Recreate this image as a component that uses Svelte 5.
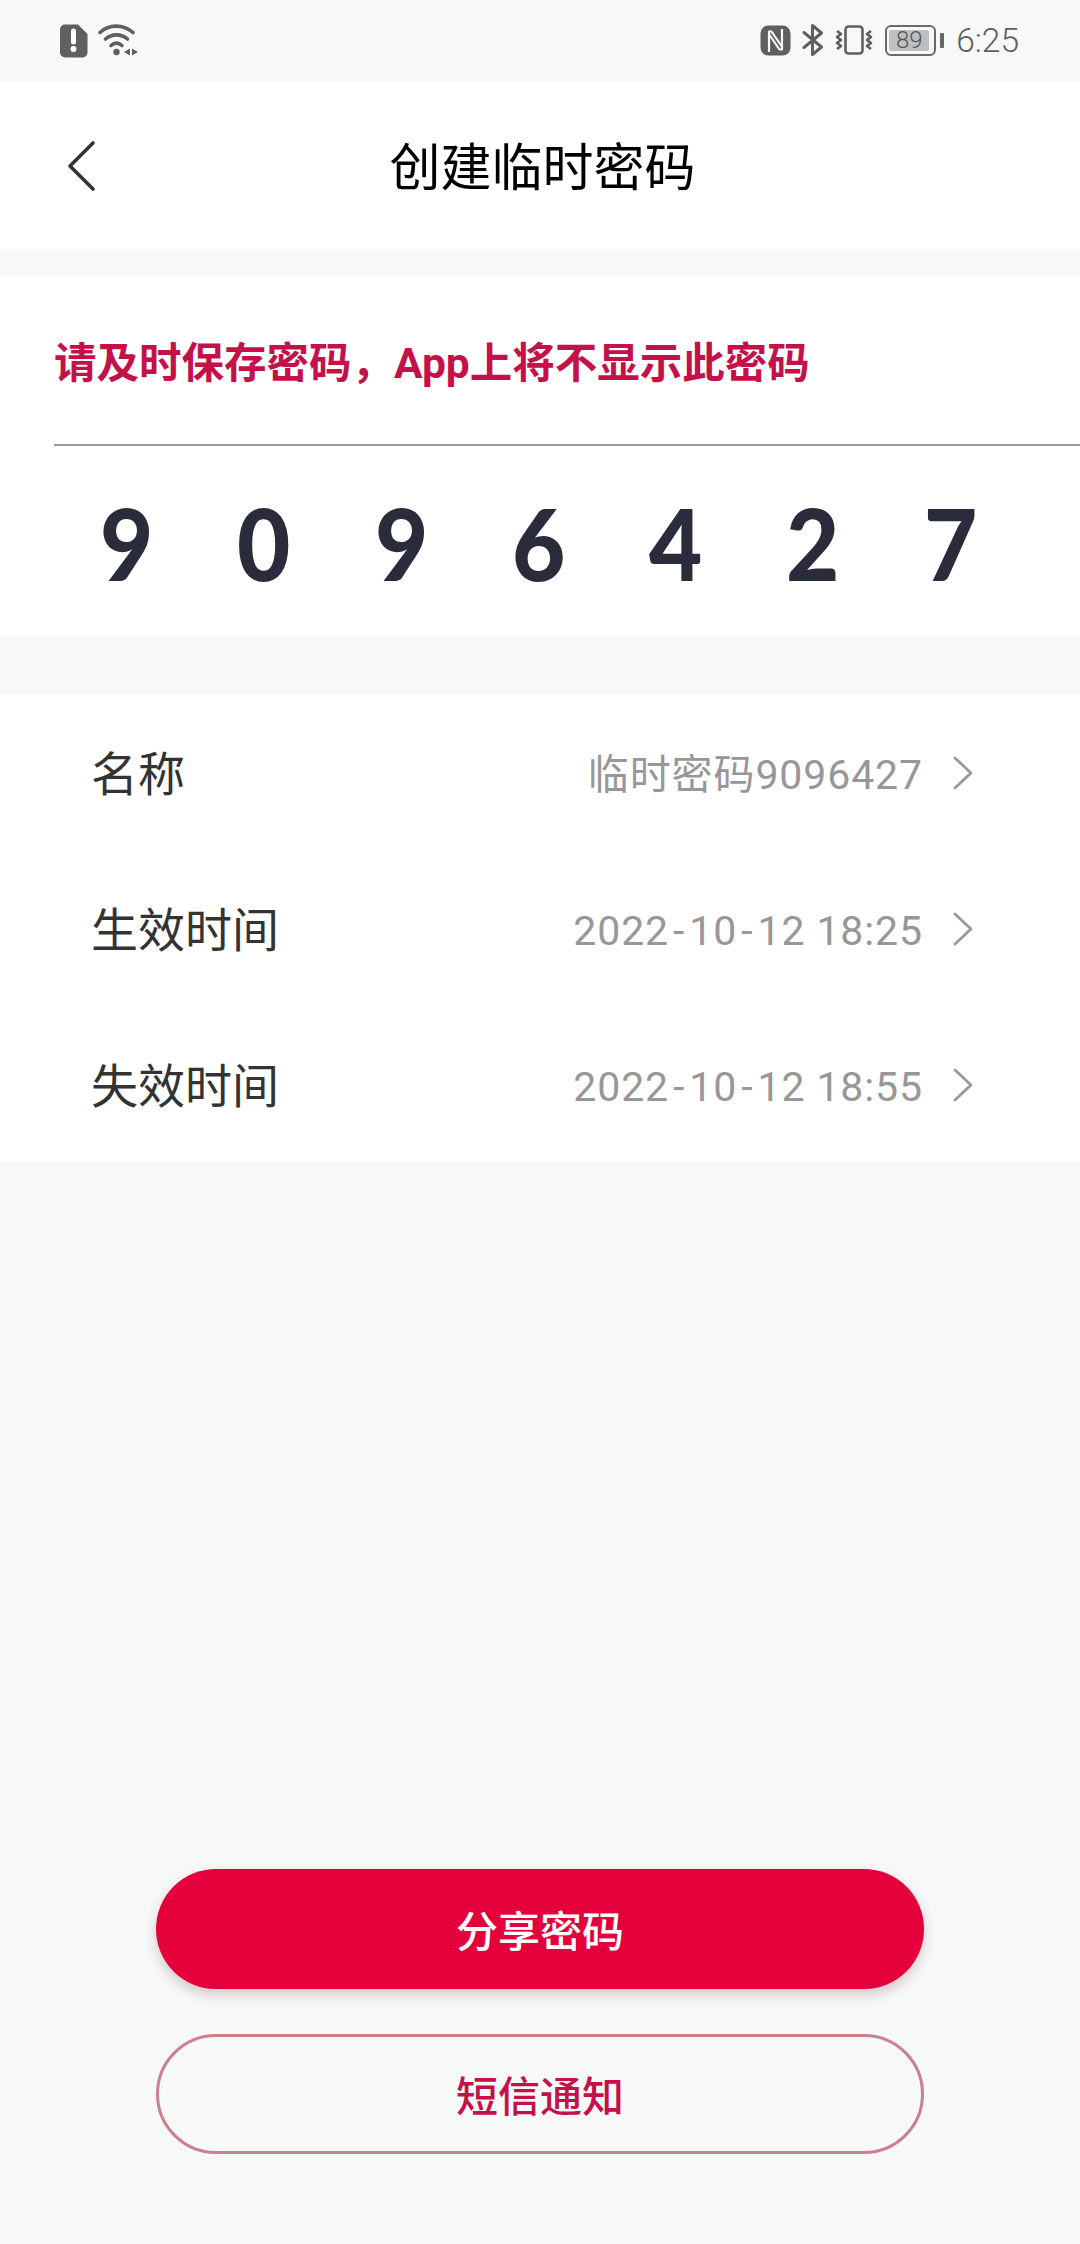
<script>
  const digits = ['9', '0', '9', '6', '4', '2', '7'];
  const rows = [
    { label: '名称', value: ['临时密码9096427'] },
    { label: '生效时间', value: ['2022', '10', '12 18:25'] },
    { label: '失效时间', value: ['2022', '10', '12 18:55'] }
  ];
</script>

<div class="page">
  <header class="status">
    <div class="status-left">
      <svg width="28" height="34" viewBox="0 0 28 34" class="alert">
        <path d="M5 0.5H18L27.5 10V28.5a5 5 0 0 1-5 5H5a5 5 0 0 1-5-5V5.500a5 5 0 0 1 5-5Z" fill="#5f5f5f" />
        <path d="M13.500 7v11" stroke="#fff" stroke-width="5" stroke-linecap="round" />
        <circle cx="13.500" cy="25" r="3" fill="#fff" />
      </svg>
      <svg width="40" height="34" viewBox="0 0 40 34" class="wifi">
        <g fill="none" stroke="#5f5f5f" stroke-width="3.600" stroke-linecap="round">
          <path d="M2 8.500C11 0 25 0 35 8.500" />
          <path d="M7.500 15C14 9.500 23 9.500 29.500 15" />
          <path d="M13 21.500C16.500 18.500 20.500 18.500 24 21.500" />
        </g>
        <circle cx="18.500" cy="28" r="3.200" fill="#5f5f5f" />
        <path d="M32 24.500v7l-6-3.500ZM34 24.500v7l6-3.500Z" fill="#5f5f5f" />
      </svg>
    </div>
    <div class="status-right">
      <svg width="31" height="31" viewBox="0 0 31 31" class="nfc">
        <rect x="0.500" y="0.500" width="30" height="30" rx="8" fill="#5f5f5f" />
        <g fill="none" stroke="#f6f8f8" stroke-width="2.200" stroke-linejoin="round">
          <path d="M9 27V6.500h2.500L21.500 21" />
          <path d="M22 4V24.500h-2.500L9.500 10" />
        </g>
      </svg>
      <svg width="22" height="32" viewBox="0 0 22 32" class="bt">
        <path d="M2 8.500L19.500 23L10.500 30.500V1.500L19.500 9L2 23.500" fill="none" stroke="#5f5f5f" stroke-width="3" stroke-linecap="round" stroke-linejoin="round" />
      </svg>
      <svg width="38" height="30" viewBox="0 0 38 30" class="vib">
        <rect x="10.500" y="1.500" width="17" height="27" rx="3" fill="none" stroke="#5f5f5f" stroke-width="2.600" />
        <g fill="none" stroke="#5f5f5f" stroke-width="2.600" stroke-linejoin="round">
          <path d="M2 6l4 3-4 3 4 3-4 3 4 3-4 3" />
          <path d="M36 6l-4 3 4 3-4 3 4 3-4 3 4 3" />
        </g>
      </svg>
      <div class="battery">
        <div class="battery-body"><span class="battery-level">89</span></div>
        <div class="battery-tip"></div>
      </div>
      <span class="time">6:25</span>
    </div>
  </header>

  <nav class="navbar">
    <svg class="back" width="34" height="54" viewBox="0 0 34 54">
      <path d="M27 4L4 27L27 50" fill="none" stroke="#333" stroke-width="3.600" stroke-linecap="round" stroke-linejoin="round" />
    </svg>
    <h1>创建临时密码</h1>
  </nav>

  <section class="code-card">
    <p class="warning">请及时保存密码，App上将不显示此密码</p>
    <div class="rule"></div>
    <div class="digits">
      {#each digits as d}
        <span class="digit">{d}</span>
      {/each}
    </div>
  </section>

  <section class="list">
    {#each rows as row}
      <div class="row">
        <span class="label">{row.label}</span>
        <span class="value">
          {#each row.value as part, i}{#if i > 0}<span class="dash">-</span>{/if}{part}{/each}
        </span>
        <svg class="chev" width="20" height="34" viewBox="0 0 20 34">
          <path d="M2 2L18 17L2 32" fill="none" stroke="#999" stroke-width="2.800" stroke-linecap="round" stroke-linejoin="round" />
        </svg>
      </div>
    {/each}
  </section>

  <div class="actions">
    <button class="primary">分享密码</button>
    <button class="secondary">短信通知</button>
  </div>
</div>

<style>
  :global(body) {
    margin: 0;
    background: #f7f8f8;
  }
  .page {
    width: 1080px;
    height: 2244px;
    background: #f7f8f8;
    display: flex;
    flex-direction: column;
    font-family: Roboto, "Noto Sans CJK SC", sans-serif;
    overflow: hidden;
  }
  .status {
    height: 82px;
    box-sizing: border-box;
    display: flex;
    justify-content: space-between;
    align-items: flex-start;
    padding: 24px 61px 0 60px;
  }
  .status-left {
    display: flex;
    gap: 10px;
  }
  .status-right {
    display: flex;
    align-items: center;
    height: 32px;
  }
  .bt { margin-left: 11px; }
  .vib { margin-left: 11px; }
  .battery {
    display: flex;
    align-items: center;
    margin-left: 12px;
    gap: 4px;
  }
  .battery-body {
    width: 51px;
    height: 31px;
    box-sizing: border-box;
    border: 2.500px solid #6a6a6a;
    border-radius: 6px;
    padding: 3px 5px 3px 2px;
    display: flex;
  }
  .battery-level {
    flex: 1;
    background: #c0c0c0;
    border-radius: 2px;
    color: #555;
    font-size: 24px;
    font-weight: 300;
    line-height: 21px;
    text-align: center;
  }
  .battery-tip {
    width: 4px;
    height: 15px;
    background: #666;
    border-radius: 1px;
  }
  .time {
    margin-left: 12px;
    padding-top: 2px;
    font-size: 33.500px;
    font-weight: 300;
    color: #5f5f5f;
    line-height: 32px;
  }
  .navbar {
    height: 167px;
    box-sizing: border-box;
    padding: 0 0 3px 5px;
    background: #fff;
    display: flex;
    align-items: center;
    justify-content: center;
    position: relative;
  }
  .back {
    position: absolute;
    left: 66px;
    top: 57px;
  }
  h1 {
    margin: 0;
    font-size: 51px;
    font-weight: 400;
    color: #000;
  }
  .code-card {
    margin-top: 28px;
    height: 358px;
    background: #fff;
    display: flex;
    flex-direction: column;
  }
  .warning {
    margin: 0;
    padding: 57px 0 0 54px;
    height: 110px;
    box-sizing: content-box;
    font-size: 42.500px;
    line-height: 60px;
    font-weight: 700;
    color: #c4114a;
    white-space: nowrap;
  }
  .rule {
    margin-left: 54px;
    height: 2px;
    background: #999;
  }
  .digits {
    display: grid;
    grid-template-columns: repeat(7, 137.300px);
    padding: 46px 0 0 58px;
  }
  .digit {
    text-align: center;
    font-family: Lato, sans-serif;
    font-weight: 900;
    font-size: 100px;
    line-height: 100px;
    color: #2a2c3c;
    transform: scaleX(0.92);
  }
  .list {
    margin-top: 59px;
    background: #fff;
  }
  .row {
    height: 156px;
    box-sizing: border-box;
    display: flex;
    align-items: center;
    padding: 0 107px 0 91px;
  }
  .label {
    flex: 1;
    font-size: 47px;
    line-height: 60px;
    padding-top: 6px;
    color: #333;
  }
  .value {
    font-size: 41px;
    line-height: 60px;
    padding-top: 5px;
    letter-spacing: 0.900px;
    color: #979797;
    white-space: nowrap;
  }
  .dash {
    margin: 0 4px;
  }
  .chev {
    margin: 2px 0 0 30px;
  }
  .actions {
    margin-top: auto;
    padding: 0 156px 90px;
    display: flex;
    flex-direction: column;
    gap: 45px;
  }
  button {
    height: 120px;
    width: 100%;
    border-radius: 60px;
    font-family: inherit;
    font-size: 42px;
    font-weight: 500;
    padding: 0 0 2px;
  }
  .primary {
    background: #e4003a;
    border: none;
    color: #fff;
    box-shadow: 0 6px 12px rgba(120, 60, 70, 0.25);
  }
  .secondary {
    background: transparent;
    border: 3px solid #cc7f8c;
    color: #c4114a;
  }
</style>
